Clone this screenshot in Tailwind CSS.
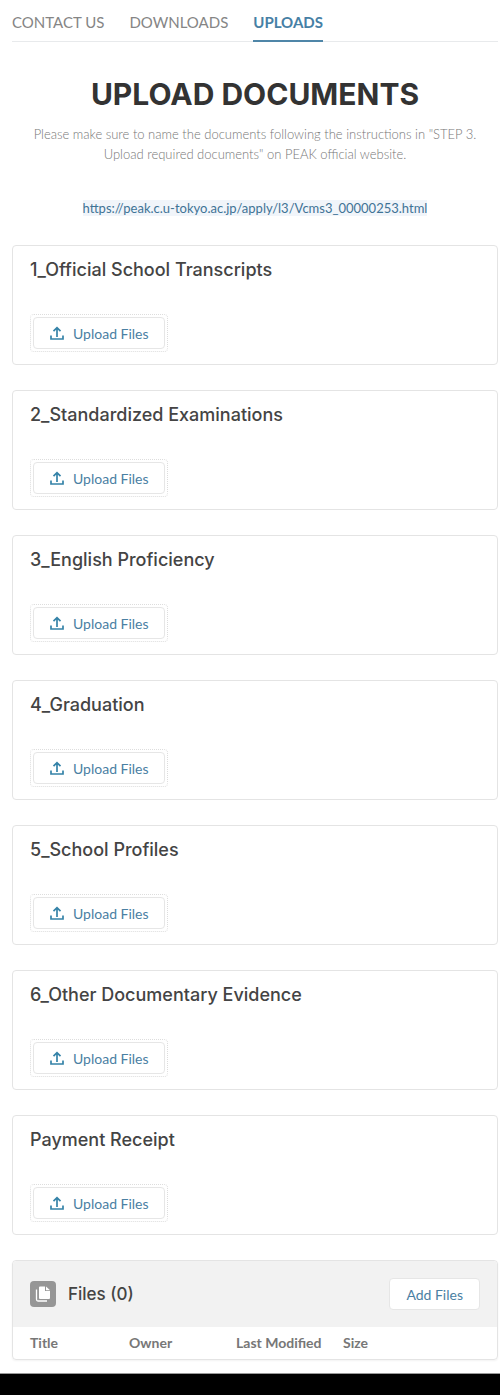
<!DOCTYPE html>
<html lang="en">
<head>
  <meta charset="UTF-8" />
  <meta name="viewport" content="width=device-width, initial-scale=1.0" />
  <title>Upload Documents | PEAK</title>
  <script src="https://cdn.jsdelivr.net/npm/@tailwindcss/browser@4"></script>
</head>
<body class="bg-black font-['Lato',sans-serif] text-[#444]">

  <div class="bg-white pt-3 pr-0.5 pb-[13px] pl-3 border-b border-[#999]">

    <!-- Tabs -->
    <nav class="flex gap-[25px] border-b border-[#e8eaec] text-[15px] leading-5 text-[#858585]">
      <a href="#contact" class="pb-2">CONTACT US</a>
      <a href="#downloads" class="pb-2">DOWNLOADS</a>
      <a href="#uploads" class="pb-2 -mb-px border-b-2 border-[#4f86a8] font-bold text-[#4680a5]">UPLOADS</a>
    </nav>

    <!-- Intro -->
    <header class="pt-8 text-center">
      <h1 class="font-['Inter',sans-serif] text-[30px] leading-10 font-bold text-[#333]">UPLOAD DOCUMENTS</h1>
      <p class="mt-2.5 px-3 text-[13px] leading-5 font-light text-[#777]">Please make sure to name the documents following the instructions in "STEP 3. Upload required documents" on PEAK official website.</p>
      <p class="mt-8 text-[13px] leading-6"><a href="https://peak.c.u-tokyo.ac.jp/apply/l3/Vcms3_00000253.html" class="bg-[#f1f5fa] text-[#3f7396]">https://peak.c.u-tokyo.ac.jp/apply/l3/Vcms3_00000253.html</a></p>
    </header>

    <main class="mt-[25px]">
      <div id="upload-sections"></div>

      <!-- Files -->
      <section class="rounded border border-[#e4e4e4] shadow-xs">
        <div class="flex items-center rounded-t bg-[#f2f2f2] px-[17px] py-[17px]">
          <svg class="size-[26px]" viewBox="0 0 26 26" aria-hidden="true">
            <rect width="26" height="26" rx="4" fill="#969696" />
            <path d="M10 5.500h5v4.500h5v7a1 1 0 0 1-1 1h-9a1 1 0 0 1-1-1V6.500a1 1 0 0 1 1-1z" fill="#fff" />
            <path d="M16 5.500l4 3.700h-4z" fill="#fff" />
            <path d="M6.500 8.500v10a1.500 1.500 0 0 0 1.500 1.500h9" fill="none" stroke="#fff" stroke-width="1.300" />
          </svg>
          <h2 class="ml-3 font-['Inter',sans-serif] text-[17px] leading-6 font-medium text-[#444]">Files (0)</h2>
          <button type="button" class="ml-auto h-8 rounded border border-[#e6e6e6] bg-white px-4 text-[14px] text-[#4a80a3]">Add Files</button>
        </div>
        <table class="w-full table-fixed text-left text-[14px] leading-5 text-[#777]">
          <thead>
            <tr>
              <th class="w-[116px] py-1.5 pl-[17px] font-bold">Title</th>
              <th class="w-[107px] py-1.5 font-bold">Owner</th>
              <th class="w-[107px] py-1.5 font-bold">Last Modified</th>
              <th class="py-1.5 font-bold">Size</th>
            </tr>
          </thead>
        </table>
      </section>
    </main>
  </div>

  <script>
    const sections = [
      "1_Official School Transcripts",
      "2_Standardized Examinations",
      "3_English Proficiency",
      "4_Graduation",
      "5_School Profiles",
      "6_Other Documentary Evidence",
      "Payment Receipt"
    ];

    document.getElementById("upload-sections").innerHTML = sections.map(title => `
      <section class="mb-[25px] rounded border border-[#e4e4e4] px-[17px] pt-2.5 pb-3">
        <h2 class="font-['Inter',sans-serif] text-[18px] leading-7 font-medium text-[#444]">${title}</h2>
        <div class="mt-[30px] inline-block rounded border border-dotted border-[#ddd] p-0.5 align-top">
          <button type="button" class="flex h-8 items-center gap-2 rounded border border-[#e6e6e6] bg-white px-[15px] text-[14px] text-[#4a80a3]">
            <svg class="size-4" viewBox="0 0 16 16" fill="none" stroke="#3583a8" stroke-width="1.700" aria-hidden="true">
              <path d="M8 12V3M4.500 6.200L8 2.700l3.500 3.500M2 10.500v3.500h12v-3.500" />
            </svg>
            Upload Files
          </button>
        </div>
      </section>
    `).join("");
  </script>
</body>
</html>
